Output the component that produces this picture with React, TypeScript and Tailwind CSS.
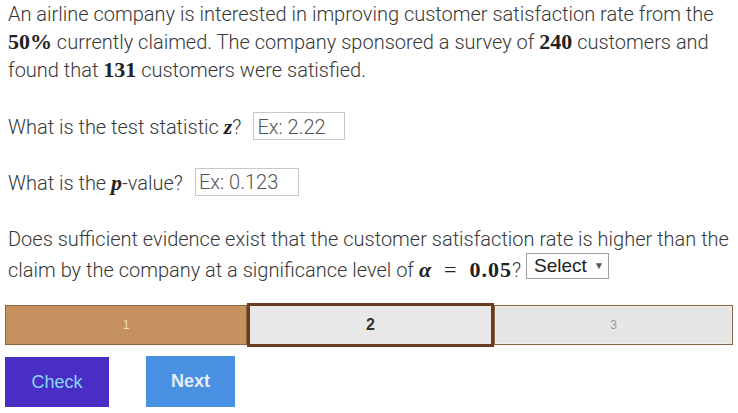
import { useState } from 'react';

const MathNum = ({ children }: { children: React.ReactNode }) => (
  <span className="font-['Liberation_Serif',serif] font-bold text-[22px] text-[#222]">{children}</span>
);

const MathVar = ({ children }: { children: React.ReactNode }) => (
  <span className="font-['Liberation_Serif',serif] font-bold italic text-[22px] text-[#222]">{children}</span>
);

const steps = [1, 2, 3];

const App = () => {
  const [zValue, setZValue] = useState('');
  const [pValue, setPValue] = useState('');
  const [answer, setAnswer] = useState('');
  const current = 2;

  return (
    <div className="w-[738px] h-[413px] overflow-hidden bg-white font-['Roboto',sans-serif] font-light text-[20px] text-[#383838]">
      <div className="px-2">
        {/* Problem statement */}
        <p className="leading-[28px] whitespace-nowrap">
          An airline company is interested in improving customer satisfaction rate from the
          <br />
          <MathNum>50%</MathNum> currently claimed. The company sponsored a survey of <MathNum>240</MathNum> customers and
          <br />
          found that <MathNum>131</MathNum> customers were satisfied.
        </p>

        {/* Test statistic */}
        <div className="mt-[28px] leading-[28px] whitespace-nowrap">
          What is the test statistic <MathVar>z</MathVar>?
          <input
            type="text"
            value={zValue}
            onChange={(e) => setZValue(e.target.value)}
            placeholder="Ex: 2.22"
            className="ml-[12px] w-[92px] h-[28px] border border-[#c8c8c8] pl-[3px] pt-[1px] font-light text-[20px] text-[#333] placeholder:text-[#555] focus:outline-none"
          />
        </div>

        {/* P-value */}
        <div className="mt-[27px] leading-[28px] whitespace-nowrap">
          What is the <MathVar>p</MathVar>-value?
          <input
            type="text"
            value={pValue}
            onChange={(e) => setPValue(e.target.value)}
            placeholder="Ex: 0.123"
            className="ml-[12px] w-[104px] h-[28px] border border-[#c8c8c8] pl-[3px] pt-[1px] font-light text-[20px] text-[#333] placeholder:text-[#555] focus:outline-none"
          />
        </div>

        {/* Conclusion */}
        <p className="mt-[29px] leading-[28px] whitespace-nowrap">
          Does sufficient evidence exist that the customer satisfaction rate is higher than the
          <br />
          claim by the company at a significance level of <MathVar>α</MathVar>
          <span className="mx-[13px] font-['Liberation_Serif',serif] text-[22px] text-[#222]">=</span>
          <span className="tracking-[1px]">
            <MathNum>0.05</MathNum>
          </span>
          ?
          <button
            onClick={() => setAnswer(answer ? '' : 'Select')}
            className="ml-[5px] inline-flex items-center gap-[7px] h-[26px] w-[83px] pl-[7px] border border-[#a0a0a0] bg-white font-['Liberation_Sans',sans-serif] font-normal text-[19px] text-[#222] align-[5px]"
          >
            Select
            <span className="text-[10px] text-[#555]">▼</span>
          </button>
        </p>
      </div>

      {/* Progress bar */}
      <div className="mt-[19px] ml-[5px] flex items-center h-[44px]">
        {steps.map((step) => {
          if (step < current) {
            return (
              <div
                key={step}
                className="w-[242px] h-[40px] flex items-center justify-center bg-[#c4915f] border border-[#8a6440] font-['Liberation_Sans',sans-serif] text-[12px] text-[#f1dcc4]"
              >
                {step}
              </div>
            );
          }
          if (step === current) {
            return (
              <div
                key={step}
                className="w-[247px] h-[44px] flex items-center justify-center bg-[#e8e8e8] border-[3px] border-[#6b3b21] font-['Liberation_Sans',sans-serif] font-bold text-[16px] text-[#333]"
              >
                {step}
              </div>
            );
          }
          return (
            <div
              key={step}
              className="w-[239px] h-[40px] flex items-center justify-center bg-[#e6e6e6] border border-[#8a6440] font-['Liberation_Sans',sans-serif] text-[12px] text-[#999]"
            >
              <div className="w-full h-full flex items-center justify-center border border-[#f6ece1]">{step}</div>
            </div>
          );
        })}
      </div>

      {/* Action buttons */}
      <div className="mt-[9px] ml-[5px] flex items-start gap-[37px] font-['Liberation_Sans',sans-serif] text-[18px]">
        <button className="w-[104px] h-[50px] mt-[1px] bg-[#4a2dc5] text-[#85d6ff]">Check</button>
        <button className="w-[89px] h-[51px] bg-[#4a90e2] text-[#e3ecf7] font-bold">Next</button>
      </div>
    </div>
  );
};

export default App;
